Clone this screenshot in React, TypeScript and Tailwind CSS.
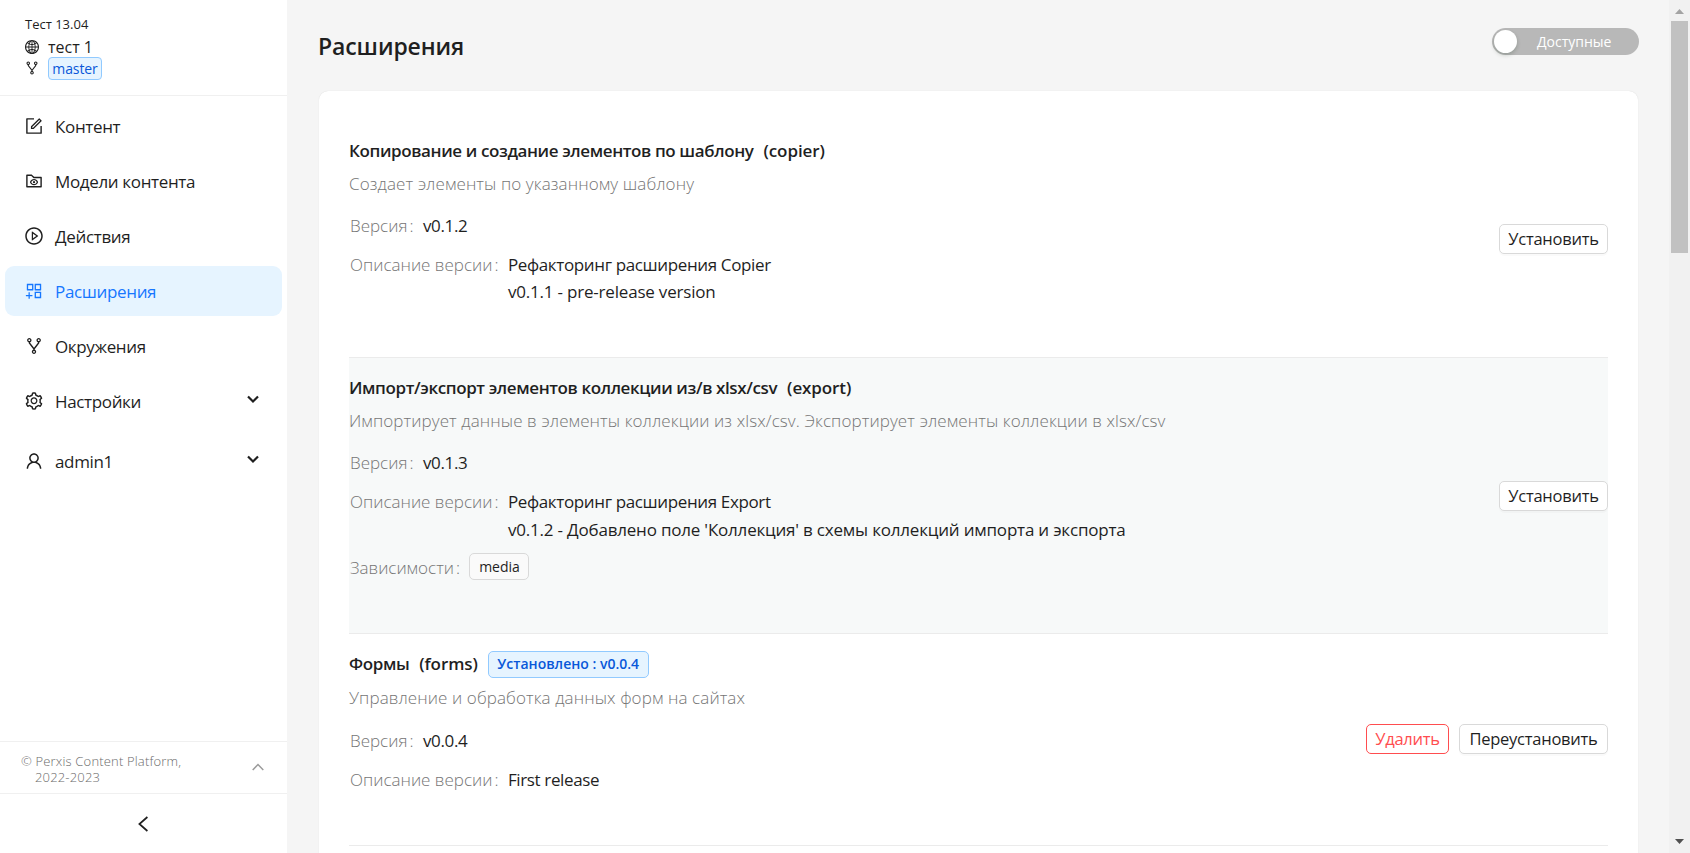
import React from 'react';
import {
  AiOutlineAppstoreAdd,
  AiOutlineFolderView,
  AiOutlineFork,
  AiOutlineForm,
  AiOutlineGlobal,
  AiOutlinePlayCircle,
  AiOutlineSetting,
  AiOutlineUser,
} from 'react-icons/ai';

type MenuEntry = { label: string; icon: React.ReactNode; active?: boolean; expandable?: boolean };

const menu: MenuEntry[] = [
  { label: 'Контент', icon: <AiOutlineForm /> },
  { label: 'Модели контента', icon: <AiOutlineFolderView /> },
  { label: 'Действия', icon: <AiOutlinePlayCircle /> },
  { label: 'Расширения', icon: <AiOutlineAppstoreAdd />, active: true },
  { label: 'Окружения', icon: <AiOutlineFork /> },
  { label: 'Настройки', icon: <AiOutlineSetting />, expandable: true },
  { label: 'admin1', icon: <AiOutlineUser />, expandable: true },
];

type Extension = {
  title: string;
  id: string;
  about: string;
  version: string;
  notes: string[];
  deps?: string[];
  installed?: string;
};

const extensions: Extension[] = [
  {
    title: 'Копирование и создание элементов по шаблону',
    id: 'copier',
    about: 'Создает элементы по указанному шаблону',
    version: 'v0.1.2',
    notes: ['Рефакторинг расширения Copier', 'v0.1.1 - pre-release version'],
  },
  {
    title: 'Импорт/экспорт элементов коллекции из/в xlsx/csv',
    id: 'export',
    about: 'Импортирует данные в элементы коллекции из xlsx/csv. Экспортирует элементы коллекции в xlsx/csv',
    version: 'v0.1.3',
    notes: ['Рефакторинг расширения Export', "v0.1.2 - Добавлено поле 'Коллекция' в схемы коллекций импорта и экспорта"],
    deps: ['media'],
  },
  {
    title: 'Формы',
    id: 'forms',
    about: 'Управление и обработка данных форм на сайтах',
    version: 'v0.0.4',
    notes: ['First release'],
    installed: 'v0.0.4',
  },
];

function Chevron() {
  return (
    <svg className="ml-auto mr-[23px] -mt-1" width="12" height="9" viewBox="0 0 12 9" fill="none" stroke="#1f1f1f" strokeWidth="2.2">
      <path d="M1 1.5 6 6.5 11 1.5" />
    </svg>
  );
}

function Sidebar() {
  return (
    <aside className="flex h-full w-[287px] shrink-0 flex-col bg-white">
      <div className="flex h-24 flex-col border-b border-[#f0f0f0] pl-[24px] pt-[13px]">
        <div className="h-[22px] pl-px text-[13px] leading-[22px]">Тест 13.04</div>
        <div className="flex h-[23px] items-center">
          <AiOutlineGlobal className="h-4 w-4" />
          <span className="ml-2 pt-px text-[16px] leading-[23px]">тест 1</span>
        </div>
        <div className="-mt-px flex h-[22px] items-center">
          <AiOutlineFork className="h-4 w-4" />
          <span className="ml-2 flex h-[23px] w-[54px] items-center justify-center rounded border border-[#91caff] bg-[#e6f4ff] pt-px text-[14px] tracking-[-0.1px] text-[#0958d9]">
            master
          </span>
        </div>
      </div>
      <nav className="flex flex-1 flex-col gap-[5px] px-[5px] pt-[5px]">
        {menu.map((m) => (
          <div
            key={m.label}
            className={
              'flex h-[50px] items-center rounded-[9px] pl-[19px] ' +
              (m.active ? 'bg-[#e6f4ff] text-[#1677ff]' : '') +
              (m.label === 'admin1' ? ' mt-[5px]' : '')
            }
          >
            <span className="text-[20px]">{m.icon}</span>
            <span className="ml-[11px] pt-[2px] text-[17px] tracking-[-0.35px]">{m.label}</span>
            {m.expandable && <Chevron />}
          </div>
        ))}
      </nav>
      <div className="flex h-[52px] border-t border-[#f0f0f0] pl-[21px] pr-[23px]">
        <div className="pt-[11px] text-[13px] font-light leading-4 tracking-[0.17px] text-[#6b6b6b]">
          <div>© Perxis Content Platform,</div>
          <div className="pl-[14px]">2022-2023</div>
        </div>
        <svg className="ml-auto mt-[21px]" width="12" height="8" viewBox="0 0 12 8" fill="none" stroke="#9b9b9b" strokeWidth="1.5">
          <path d="M.7 7 6 1.5 11.3 7" />
        </svg>
      </div>
      <div className="flex h-[60px] items-center justify-center border-t border-[#f0f0f0] pr-[2px]">
        <svg width="10" height="16" viewBox="0 0 10 16" fill="none" stroke="#1f1f1f" strokeWidth="1.7">
          <path d="M9.4 1 1.4 8l8 7" />
        </svg>
      </div>
    </aside>
  );
}

function Button({ children, className }: { children: React.ReactNode; className: string }) {
  return (
    <button
      className={
        'flex h-[30px] items-center justify-center whitespace-nowrap rounded-[5px] border bg-white pt-px text-[16.5px] tracking-[-0.25px] ' +
        className
      }
    >
      {children}
    </button>
  );
}

const plainButton = 'border-[#d9d9d9] shadow-[0_2px_0_rgba(0,0,0,0.02)] ';

function Label({ children }: { children: string }) {
  return (
    <span className="flex pl-px pr-[9.5px] font-light text-[#757575]">
      {children}
      <span className="ml-[2px]">:</span>
    </span>
  );
}

function Item({ ext, shaded }: { ext: Extension; shaded: boolean }) {
  return (
    <article
      className={
        'flex shrink-0 items-center border-b border-[#ebebeb] ' +
        (shaded ? 'h-[276px] bg-[#f7f9f9]' : ext.installed ? 'h-[212px]' : 'h-[237px]')
      }
    >
      <div className="flex h-full flex-1 flex-col whitespace-nowrap pt-4 text-[17px] leading-[27.5px]">
        <div className="flex h-7 items-center text-[17px] font-semibold tracking-[-0.39px]">
          <span>{ext.title}</span>
          <span className="ml-[10px] tracking-[-0.1px]">({ext.id})</span>
          {ext.installed && (
            <span className="ml-[10px] flex h-[27px] w-[161px] items-center justify-center rounded-[5px] border border-[#91caff] bg-[#e6f4ff] text-[14px] tracking-normal text-[#0958d9]">
              Установлено : {ext.installed}
            </span>
          )}
        </div>
        <div className={'font-light tracking-[0.1px] text-[#757575] ' + (ext.installed ? 'mt-[6px]' : 'mt-[5px]')}>{ext.about}</div>
        <div className={'flex ' + (ext.installed ? 'mt-[15px]' : 'mt-[14px]')}>
          <Label>Версия</Label>
          <span className="tracking-[-0.35px]">{ext.version}</span>
        </div>
        <div className="mt-[11.5px] flex">
          <Label>Описание версии</Label>
          <div className={ext.deps ? 'leading-7' : ''}>
            {ext.notes.map((n, i) => (
              <div key={n} className={i === 0 ? 'tracking-[-0.37px]' : 'tracking-[-0.2px]'}>
                {n}
              </div>
            ))}
          </div>
        </div>
        {ext.deps && (
          <div className="mt-[10.5px] flex">
            <Label>Зависимости</Label>
            {ext.deps.map((d) => (
              <span key={d} className="-mt-px flex h-[27px] w-[60px] items-center justify-center rounded-[5px] border border-[#d9d9d9] bg-[#fafafa] text-[14px]">
                {d}
              </span>
            ))}
          </div>
        )}
      </div>
      <div className={'flex gap-[10px] ' + (ext.installed ? 'pb-[2px]' : '')}>
        {ext.installed ? (
          <>
            <Button className="w-[83px] border-[#ff4d4f] text-[#ff4d4f]">Удалить</Button>
            <Button className={plainButton + 'w-[149px]'}>Переустановить</Button>
          </>
        ) : (
          <Button className={plainButton + 'w-[109px]'}>Установить</Button>
        )}
      </div>
    </article>
  );
}

function Scrollbar() {
  return (
    <div className="flex h-full w-[21px] shrink-0 flex-col items-center bg-[#f1f1f1]">
      <svg className="mt-[9px] shrink-0" width="9" height="5" viewBox="0 0 9 5" fill="#a3a3a3">
        <path d="M0 5 4.5 0 9 5z" />
      </svg>
      <div className="mt-[7px] h-[232px] w-[17px] bg-[#c1c1c1]" />
      <svg className="mb-[9px] mt-auto shrink-0" width="9" height="5" viewBox="0 0 9 5" fill="#505050">
        <path d="M0 0 4.5 5 9 0z" />
      </svg>
    </div>
  );
}

export default function App() {
  return (
    <div className="flex h-[853px] w-[1690px] overflow-hidden bg-[#f5f5f5] font-['Open_Sans','Noto_Sans',sans-serif] text-[#1f1f1f]">
      <Sidebar />
      <main className="flex h-full flex-1 flex-col pl-8 pr-[31px]">
        <header className="flex h-[91px] shrink-0 justify-between">
          <h1 className="-ml-px pt-[30px] text-[23px] font-semibold leading-8 tracking-[-0.1px]">Расширения</h1>
          <div className="-mr-px mt-7 flex h-[27px] w-[147px] items-center rounded-full bg-[#b8b8b8] pl-[2px] text-[14px] font-normal text-white">
            <span className="h-[23px] w-[23px] rounded-full bg-white shadow-[0_2px_4px_rgba(0,35,11,0.2)]" />
            <span className="ml-5">Доступные</span>
          </div>
        </header>
        <section className="flex flex-1 flex-col overflow-hidden rounded-t-[9px] bg-white px-[30px] pt-[30px] shadow-[0_0_1px_rgba(0,0,0,0.15)]">
          {extensions.map((e, i) => (
            <Item key={e.id} ext={e} shaded={i % 2 === 1} />
          ))}
        </section>
      </main>
      <Scrollbar />
    </div>
  );
}
